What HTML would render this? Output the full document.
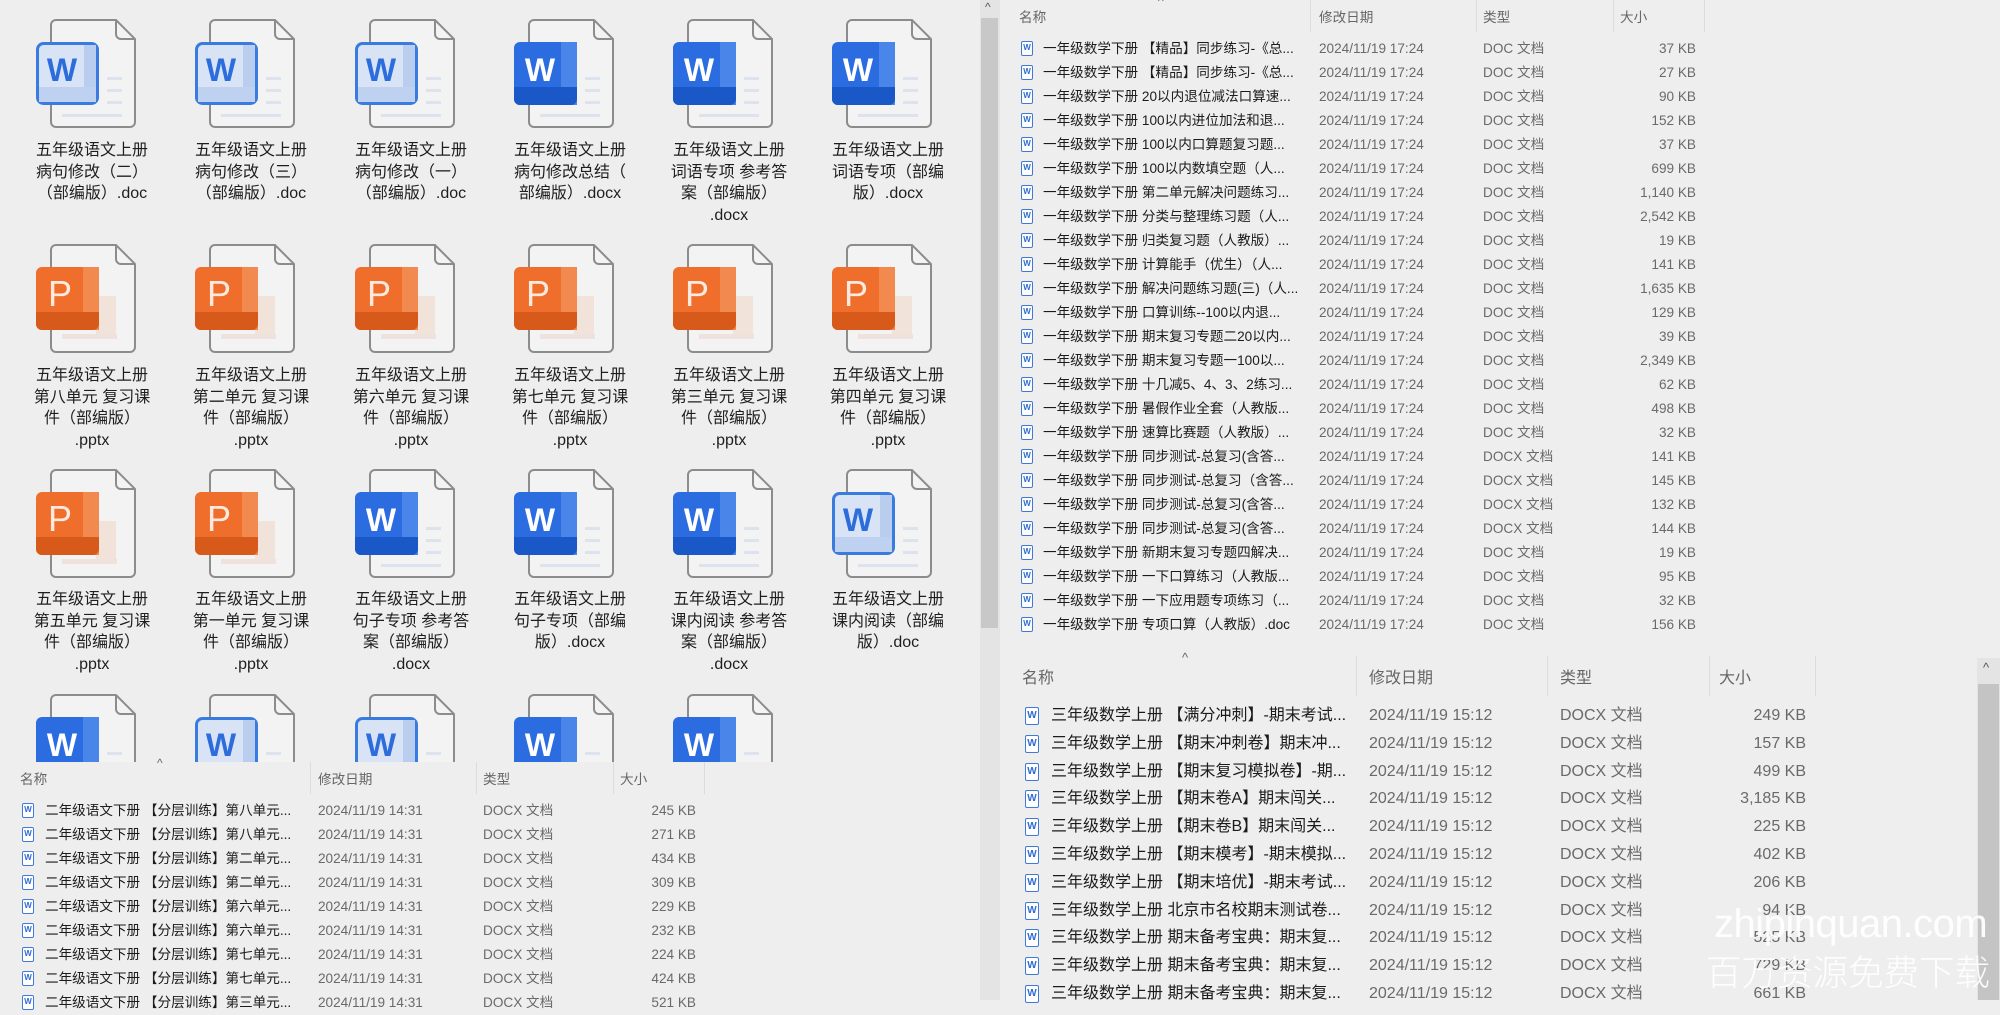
<!DOCTYPE html>
<html><head><meta charset="utf-8">
<style>
*{margin:0;padding:0;box-sizing:border-box}
body{width:2000px;height:1000px;overflow:hidden;background:#eeeeee;position:relative;font-family:"Liberation Sans","Noto Sans CJK SC",sans-serif;color:#1b1b1b}
.ico{position:absolute;width:100px;height:112px}
.lab{position:absolute;width:150px;text-align:center;font-size:16px;line-height:21.7px;color:#1e1e1e}
.r{position:absolute;left:0;width:2000px;white-space:nowrap}
.r span{position:absolute;top:0}
.ic{display:inline-block;width:12px;height:15px;border:1.5px solid #3f7ad6;border-radius:2px;background:#fff;font:bold 8px/12px "Liberation Sans",sans-serif;color:#2f6ad0;text-align:center}
.n{overflow:hidden}
.d,.t,.s{color:#6a6a6a}
.s{text-align:right}
.h{position:absolute;color:#666;white-space:nowrap}
.sep{position:absolute;width:1px;background:#dcdcdc}
/* panel A */
.A{height:24px;line-height:24px;font-size:13.6px}
.A .ic{left:1021px;top:4px}
.A .n{left:1043px;width:262px}
.A .d{left:1319px}.A .t{left:1483px}.A .s{left:1610px;width:86px}
/* panel B */
.B{height:24px;line-height:24px;font-size:13.6px}
.B .ic{left:22px;top:4px}
.B .n{left:45px;width:258px}
.B .d{left:318px}.B .t{left:483px}.B .s{left:610px;width:86px}
/* panel C */
.C{height:28px;line-height:28px;font-size:16px}
.C .ic{left:1025px;top:5px;width:14px;height:18px;font-size:10px;line-height:15px}
.C .n{left:1051px;width:305px}
.C .d{left:1369px}.C .t{left:1560px}.C .s{left:1710px;width:96px}
</style></head><body>
<svg width="0" height="0" style="position:absolute">
<defs>
<symbol id="pg" viewBox="0 0 100 112">
<path d="M20,1 H80 L99,20 V103 a5 5 0 0 1 -5 5 H20 a5 5 0 0 1 -5 -5 V6 a5 5 0 0 1 5 -5 z" fill="#f3f3f3" stroke="#8c8c8c" stroke-width="2"/>
<path d="M80,1 V15 a5 5 0 0 0 5 5 H99" fill="none" stroke="#8c8c8c" stroke-width="2"/>
</symbol>
<symbol id="lines" viewBox="0 0 100 112">
<rect x="71" y="58" width="15" height="3" fill="#dde3ec"/><rect x="71" y="70" width="15" height="3" fill="#dde3ec"/><rect x="71" y="82" width="15" height="3" fill="#dde3ec"/><rect x="26" y="95" width="60" height="3" fill="#dde3ec"/>
</symbol>
</defs></svg>

<!-- icon grid -->
<div id="grid"></div>

<!-- Row 1 -->
<svg class="ico" style="left:36px;top:19px" viewBox="0 0 100 112"><use href="#pg"/><use href="#lines"/><rect x="1.5" y="24.5" width="60" height="60" rx="6" fill="#d8e4f6" stroke="#3a7be0" stroke-width="3"/><rect x="48" y="26" width="12" height="57" fill="#b9cdef"/><rect x="3" y="68" width="57" height="15" fill="#bed1f0"/><text x="26" y="62" text-anchor="middle" font-family="Liberation Sans" font-weight="bold" font-size="32" fill="#2d6cdb">W</text></svg>
<div class="lab" style="left:17px;top:140px">五年级语文上册<br>病句修改（二）<br>（部编版）.doc</div>
<svg class="ico" style="left:195px;top:19px" viewBox="0 0 100 112"><use href="#pg"/><use href="#lines"/><rect x="1.5" y="24.5" width="60" height="60" rx="6" fill="#d8e4f6" stroke="#3a7be0" stroke-width="3"/><rect x="48" y="26" width="12" height="57" fill="#b9cdef"/><rect x="3" y="68" width="57" height="15" fill="#bed1f0"/><text x="26" y="62" text-anchor="middle" font-family="Liberation Sans" font-weight="bold" font-size="32" fill="#2d6cdb">W</text></svg>
<div class="lab" style="left:176px;top:140px">五年级语文上册<br>病句修改（三）<br>（部编版）.doc</div>
<svg class="ico" style="left:355px;top:19px" viewBox="0 0 100 112"><use href="#pg"/><use href="#lines"/><rect x="1.5" y="24.5" width="60" height="60" rx="6" fill="#d8e4f6" stroke="#3a7be0" stroke-width="3"/><rect x="48" y="26" width="12" height="57" fill="#b9cdef"/><rect x="3" y="68" width="57" height="15" fill="#bed1f0"/><text x="26" y="62" text-anchor="middle" font-family="Liberation Sans" font-weight="bold" font-size="32" fill="#2d6cdb">W</text></svg>
<div class="lab" style="left:336px;top:140px">五年级语文上册<br>病句修改（一）<br>（部编版）.doc</div>
<svg class="ico" style="left:514px;top:19px" viewBox="0 0 100 112"><use href="#pg"/><use href="#lines"/><rect x="0" y="23" width="63" height="63" rx="6" fill="#2b6de0"/><rect x="47" y="23" width="16" height="63" fill="#4a86ea"/><path d="M0,68 H63 V80 a6 6 0 0 1 -6 6 H6 a6 6 0 0 1 -6 -6z" fill="#1a58c8"/><text x="26" y="62" text-anchor="middle" font-family="Liberation Sans" font-weight="bold" font-size="32" fill="#fff">W</text></svg>
<div class="lab" style="left:495px;top:140px">五年级语文上册<br>病句修改总结（<br>部编版）.docx</div>
<svg class="ico" style="left:673px;top:19px" viewBox="0 0 100 112"><use href="#pg"/><use href="#lines"/><rect x="0" y="23" width="63" height="63" rx="6" fill="#2b6de0"/><rect x="47" y="23" width="16" height="63" fill="#4a86ea"/><path d="M0,68 H63 V80 a6 6 0 0 1 -6 6 H6 a6 6 0 0 1 -6 -6z" fill="#1a58c8"/><text x="26" y="62" text-anchor="middle" font-family="Liberation Sans" font-weight="bold" font-size="32" fill="#fff">W</text></svg>
<div class="lab" style="left:654px;top:140px">五年级语文上册<br>词语专项 参考答<br>案（部编版）<br>.docx</div>
<svg class="ico" style="left:832px;top:19px" viewBox="0 0 100 112"><use href="#pg"/><use href="#lines"/><rect x="0" y="23" width="63" height="63" rx="6" fill="#2b6de0"/><rect x="47" y="23" width="16" height="63" fill="#4a86ea"/><path d="M0,68 H63 V80 a6 6 0 0 1 -6 6 H6 a6 6 0 0 1 -6 -6z" fill="#1a58c8"/><text x="26" y="62" text-anchor="middle" font-family="Liberation Sans" font-weight="bold" font-size="32" fill="#fff">W</text></svg>
<div class="lab" style="left:813px;top:140px">五年级语文上册<br>词语专项（部编<br>版）.docx</div>

<!-- Row 2 PPT -->
<svg class="ico" style="left:36px;top:244px" viewBox="0 0 100 112"><use href="#pg"/><rect x="60" y="52" width="20" height="42" fill="#f1e2da"/><rect x="26" y="90" width="55" height="5" fill="#efe2dc"/><rect x="0" y="23" width="63" height="63" rx="6" fill="#ef6e2c"/><rect x="47" y="23" width="16" height="63" fill="#f2894f"/><path d="M0,68 H63 V80 a6 6 0 0 1 -6 6 H6 a6 6 0 0 1 -6 -6z" fill="#d75a1b"/><text x="12" y="62" font-family="Liberation Sans" font-size="36" fill="#fde9dd">P</text></svg>
<div class="lab" style="left:17px;top:365px">五年级语文上册<br>第八单元 复习课<br>件（部编版）<br>.pptx</div>
<svg class="ico" style="left:195px;top:244px" viewBox="0 0 100 112"><use href="#pg"/><rect x="60" y="52" width="20" height="42" fill="#f1e2da"/><rect x="26" y="90" width="55" height="5" fill="#efe2dc"/><rect x="0" y="23" width="63" height="63" rx="6" fill="#ef6e2c"/><rect x="47" y="23" width="16" height="63" fill="#f2894f"/><path d="M0,68 H63 V80 a6 6 0 0 1 -6 6 H6 a6 6 0 0 1 -6 -6z" fill="#d75a1b"/><text x="12" y="62" font-family="Liberation Sans" font-size="36" fill="#fde9dd">P</text></svg>
<div class="lab" style="left:176px;top:365px">五年级语文上册<br>第二单元 复习课<br>件（部编版）<br>.pptx</div>
<svg class="ico" style="left:355px;top:244px" viewBox="0 0 100 112"><use href="#pg"/><rect x="60" y="52" width="20" height="42" fill="#f1e2da"/><rect x="26" y="90" width="55" height="5" fill="#efe2dc"/><rect x="0" y="23" width="63" height="63" rx="6" fill="#ef6e2c"/><rect x="47" y="23" width="16" height="63" fill="#f2894f"/><path d="M0,68 H63 V80 a6 6 0 0 1 -6 6 H6 a6 6 0 0 1 -6 -6z" fill="#d75a1b"/><text x="12" y="62" font-family="Liberation Sans" font-size="36" fill="#fde9dd">P</text></svg>
<div class="lab" style="left:336px;top:365px">五年级语文上册<br>第六单元 复习课<br>件（部编版）<br>.pptx</div>
<svg class="ico" style="left:514px;top:244px" viewBox="0 0 100 112"><use href="#pg"/><rect x="60" y="52" width="20" height="42" fill="#f1e2da"/><rect x="26" y="90" width="55" height="5" fill="#efe2dc"/><rect x="0" y="23" width="63" height="63" rx="6" fill="#ef6e2c"/><rect x="47" y="23" width="16" height="63" fill="#f2894f"/><path d="M0,68 H63 V80 a6 6 0 0 1 -6 6 H6 a6 6 0 0 1 -6 -6z" fill="#d75a1b"/><text x="12" y="62" font-family="Liberation Sans" font-size="36" fill="#fde9dd">P</text></svg>
<div class="lab" style="left:495px;top:365px">五年级语文上册<br>第七单元 复习课<br>件（部编版）<br>.pptx</div>
<svg class="ico" style="left:673px;top:244px" viewBox="0 0 100 112"><use href="#pg"/><rect x="60" y="52" width="20" height="42" fill="#f1e2da"/><rect x="26" y="90" width="55" height="5" fill="#efe2dc"/><rect x="0" y="23" width="63" height="63" rx="6" fill="#ef6e2c"/><rect x="47" y="23" width="16" height="63" fill="#f2894f"/><path d="M0,68 H63 V80 a6 6 0 0 1 -6 6 H6 a6 6 0 0 1 -6 -6z" fill="#d75a1b"/><text x="12" y="62" font-family="Liberation Sans" font-size="36" fill="#fde9dd">P</text></svg>
<div class="lab" style="left:654px;top:365px">五年级语文上册<br>第三单元 复习课<br>件（部编版）<br>.pptx</div>
<svg class="ico" style="left:832px;top:244px" viewBox="0 0 100 112"><use href="#pg"/><rect x="60" y="52" width="20" height="42" fill="#f1e2da"/><rect x="26" y="90" width="55" height="5" fill="#efe2dc"/><rect x="0" y="23" width="63" height="63" rx="6" fill="#ef6e2c"/><rect x="47" y="23" width="16" height="63" fill="#f2894f"/><path d="M0,68 H63 V80 a6 6 0 0 1 -6 6 H6 a6 6 0 0 1 -6 -6z" fill="#d75a1b"/><text x="12" y="62" font-family="Liberation Sans" font-size="36" fill="#fde9dd">P</text></svg>
<div class="lab" style="left:813px;top:365px">五年级语文上册<br>第四单元 复习课<br>件（部编版）<br>.pptx</div>

<!-- Row 3 -->
<svg class="ico" style="left:36px;top:469px" viewBox="0 0 100 112"><use href="#pg"/><rect x="60" y="52" width="20" height="42" fill="#f1e2da"/><rect x="26" y="90" width="55" height="5" fill="#efe2dc"/><rect x="0" y="23" width="63" height="63" rx="6" fill="#ef6e2c"/><rect x="47" y="23" width="16" height="63" fill="#f2894f"/><path d="M0,68 H63 V80 a6 6 0 0 1 -6 6 H6 a6 6 0 0 1 -6 -6z" fill="#d75a1b"/><text x="12" y="62" font-family="Liberation Sans" font-size="36" fill="#fde9dd">P</text></svg>
<div class="lab" style="left:17px;top:589px">五年级语文上册<br>第五单元 复习课<br>件（部编版）<br>.pptx</div>
<svg class="ico" style="left:195px;top:469px" viewBox="0 0 100 112"><use href="#pg"/><rect x="60" y="52" width="20" height="42" fill="#f1e2da"/><rect x="26" y="90" width="55" height="5" fill="#efe2dc"/><rect x="0" y="23" width="63" height="63" rx="6" fill="#ef6e2c"/><rect x="47" y="23" width="16" height="63" fill="#f2894f"/><path d="M0,68 H63 V80 a6 6 0 0 1 -6 6 H6 a6 6 0 0 1 -6 -6z" fill="#d75a1b"/><text x="12" y="62" font-family="Liberation Sans" font-size="36" fill="#fde9dd">P</text></svg>
<div class="lab" style="left:176px;top:589px">五年级语文上册<br>第一单元 复习课<br>件（部编版）<br>.pptx</div>
<svg class="ico" style="left:355px;top:469px" viewBox="0 0 100 112"><use href="#pg"/><use href="#lines"/><rect x="0" y="23" width="63" height="63" rx="6" fill="#2b6de0"/><rect x="47" y="23" width="16" height="63" fill="#4a86ea"/><path d="M0,68 H63 V80 a6 6 0 0 1 -6 6 H6 a6 6 0 0 1 -6 -6z" fill="#1a58c8"/><text x="26" y="62" text-anchor="middle" font-family="Liberation Sans" font-weight="bold" font-size="32" fill="#fff">W</text></svg>
<div class="lab" style="left:336px;top:589px">五年级语文上册<br>句子专项 参考答<br>案（部编版）<br>.docx</div>
<svg class="ico" style="left:514px;top:469px" viewBox="0 0 100 112"><use href="#pg"/><use href="#lines"/><rect x="0" y="23" width="63" height="63" rx="6" fill="#2b6de0"/><rect x="47" y="23" width="16" height="63" fill="#4a86ea"/><path d="M0,68 H63 V80 a6 6 0 0 1 -6 6 H6 a6 6 0 0 1 -6 -6z" fill="#1a58c8"/><text x="26" y="62" text-anchor="middle" font-family="Liberation Sans" font-weight="bold" font-size="32" fill="#fff">W</text></svg>
<div class="lab" style="left:495px;top:589px">五年级语文上册<br>句子专项（部编<br>版）.docx</div>
<svg class="ico" style="left:673px;top:469px" viewBox="0 0 100 112"><use href="#pg"/><use href="#lines"/><rect x="0" y="23" width="63" height="63" rx="6" fill="#2b6de0"/><rect x="47" y="23" width="16" height="63" fill="#4a86ea"/><path d="M0,68 H63 V80 a6 6 0 0 1 -6 6 H6 a6 6 0 0 1 -6 -6z" fill="#1a58c8"/><text x="26" y="62" text-anchor="middle" font-family="Liberation Sans" font-weight="bold" font-size="32" fill="#fff">W</text></svg>
<div class="lab" style="left:654px;top:589px">五年级语文上册<br>课内阅读 参考答<br>案（部编版）<br>.docx</div>
<svg class="ico" style="left:832px;top:469px" viewBox="0 0 100 112"><use href="#pg"/><use href="#lines"/><rect x="1.5" y="24.5" width="60" height="60" rx="6" fill="#d8e4f6" stroke="#3a7be0" stroke-width="3"/><rect x="48" y="26" width="12" height="57" fill="#b9cdef"/><rect x="3" y="68" width="57" height="15" fill="#bed1f0"/><text x="26" y="62" text-anchor="middle" font-family="Liberation Sans" font-weight="bold" font-size="32" fill="#2d6cdb">W</text></svg>
<div class="lab" style="left:813px;top:589px">五年级语文上册<br>课内阅读（部编<br>版）.doc</div>

<!-- Row 4 (clipped) -->
<svg class="ico" style="left:36px;top:694px" viewBox="0 0 100 112"><use href="#pg"/><use href="#lines"/><rect x="0" y="23" width="63" height="63" rx="6" fill="#2b6de0"/><rect x="47" y="23" width="16" height="63" fill="#4a86ea"/><text x="26" y="62" text-anchor="middle" font-family="Liberation Sans" font-weight="bold" font-size="32" fill="#fff">W</text></svg>
<svg class="ico" style="left:195px;top:694px" viewBox="0 0 100 112"><use href="#pg"/><use href="#lines"/><rect x="1.5" y="24.5" width="60" height="60" rx="6" fill="#d8e4f6" stroke="#3a7be0" stroke-width="3"/><rect x="48" y="26" width="12" height="57" fill="#b9cdef"/><text x="26" y="62" text-anchor="middle" font-family="Liberation Sans" font-weight="bold" font-size="32" fill="#2d6cdb">W</text></svg>
<svg class="ico" style="left:355px;top:694px" viewBox="0 0 100 112"><use href="#pg"/><use href="#lines"/><rect x="1.5" y="24.5" width="60" height="60" rx="6" fill="#d8e4f6" stroke="#3a7be0" stroke-width="3"/><rect x="48" y="26" width="12" height="57" fill="#b9cdef"/><text x="26" y="62" text-anchor="middle" font-family="Liberation Sans" font-weight="bold" font-size="32" fill="#2d6cdb">W</text></svg>
<svg class="ico" style="left:514px;top:694px" viewBox="0 0 100 112"><use href="#pg"/><use href="#lines"/><rect x="0" y="23" width="63" height="63" rx="6" fill="#2b6de0"/><rect x="47" y="23" width="16" height="63" fill="#4a86ea"/><text x="26" y="62" text-anchor="middle" font-family="Liberation Sans" font-weight="bold" font-size="32" fill="#fff">W</text></svg>
<svg class="ico" style="left:673px;top:694px" viewBox="0 0 100 112"><use href="#pg"/><use href="#lines"/><rect x="0" y="23" width="63" height="63" rx="6" fill="#2b6de0"/><rect x="47" y="23" width="16" height="63" fill="#4a86ea"/><text x="26" y="62" text-anchor="middle" font-family="Liberation Sans" font-weight="bold" font-size="32" fill="#fff">W</text></svg>

<!-- bottom-left list panel -->
<div style="position:absolute;left:0;top:762px;width:980px;height:238px;background:#eeeeee"></div>
<div class="h" style="left:157px;top:756px;font-size:12px">^</div>
<div class="h" style="left:20px;top:768px;font-size:13.6px">名称</div>
<div class="h" style="left:318px;top:768px;font-size:13.6px">修改日期</div>
<div class="h" style="left:483px;top:768px;font-size:13.6px">类型</div>
<div class="h" style="left:620px;top:768px;font-size:13.6px">大小</div>
<div class="sep" style="left:310px;top:762px;height:32px"></div>
<div class="sep" style="left:476px;top:762px;height:32px"></div>
<div class="sep" style="left:613px;top:762px;height:32px"></div>
<div class="sep" style="left:704px;top:762px;height:32px"></div>
<div class="r B" style="top:799px"><span class="ic">W</span><span class="n">二年级语文下册 【分层训练】第八单元...</span><span class="d">2024/11/19 14:31</span><span class="t">DOCX 文档</span><span class="s">245 KB</span></div>
<div class="r B" style="top:823px"><span class="ic">W</span><span class="n">二年级语文下册 【分层训练】第八单元...</span><span class="d">2024/11/19 14:31</span><span class="t">DOCX 文档</span><span class="s">271 KB</span></div>
<div class="r B" style="top:847px"><span class="ic">W</span><span class="n">二年级语文下册 【分层训练】第二单元...</span><span class="d">2024/11/19 14:31</span><span class="t">DOCX 文档</span><span class="s">434 KB</span></div>
<div class="r B" style="top:871px"><span class="ic">W</span><span class="n">二年级语文下册 【分层训练】第二单元...</span><span class="d">2024/11/19 14:31</span><span class="t">DOCX 文档</span><span class="s">309 KB</span></div>
<div class="r B" style="top:895px"><span class="ic">W</span><span class="n">二年级语文下册 【分层训练】第六单元...</span><span class="d">2024/11/19 14:31</span><span class="t">DOCX 文档</span><span class="s">229 KB</span></div>
<div class="r B" style="top:919px"><span class="ic">W</span><span class="n">二年级语文下册 【分层训练】第六单元...</span><span class="d">2024/11/19 14:31</span><span class="t">DOCX 文档</span><span class="s">232 KB</span></div>
<div class="r B" style="top:943px"><span class="ic">W</span><span class="n">二年级语文下册 【分层训练】第七单元...</span><span class="d">2024/11/19 14:31</span><span class="t">DOCX 文档</span><span class="s">224 KB</span></div>
<div class="r B" style="top:967px"><span class="ic">W</span><span class="n">二年级语文下册 【分层训练】第七单元...</span><span class="d">2024/11/19 14:31</span><span class="t">DOCX 文档</span><span class="s">424 KB</span></div>
<div class="r B" style="top:991px"><span class="ic">W</span><span class="n">二年级语文下册 【分层训练】第三单元...</span><span class="d">2024/11/19 14:31</span><span class="t">DOCX 文档</span><span class="s">521 KB</span></div>

<!-- middle scrollbar -->
<div style="position:absolute;left:980px;top:0;width:20px;height:1000px;background:#e4e4e4"></div>
<div style="position:absolute;left:981px;top:18px;width:17px;height:610px;background:#c8c8c8"></div>
<div class="h" style="left:985px;top:0;font-size:12px;color:#555">^</div>

<!-- top-right list -->
<div class="h" style="left:1158px;top:-6px;font-size:12px">^</div>
<div class="h" style="left:1019px;top:6px;font-size:13.6px">名称</div>
<div class="h" style="left:1319px;top:6px;font-size:13.6px">修改日期</div>
<div class="h" style="left:1483px;top:6px;font-size:13.6px">类型</div>
<div class="h" style="left:1620px;top:6px;font-size:13.6px">大小</div>
<div class="sep" style="left:1310px;top:0;height:32px"></div>
<div class="sep" style="left:1476px;top:0;height:32px"></div>
<div class="sep" style="left:1613px;top:0;height:32px"></div>
<div class="sep" style="left:1704px;top:0;height:32px"></div>
<div class="r A" style="top:37px"><span class="ic">W</span><span class="n">一年级数学下册 【精品】同步练习-《总...</span><span class="d">2024/11/19 17:24</span><span class="t">DOC 文档</span><span class="s">37 KB</span></div>
<div class="r A" style="top:61px"><span class="ic">W</span><span class="n">一年级数学下册 【精品】同步练习-《总...</span><span class="d">2024/11/19 17:24</span><span class="t">DOC 文档</span><span class="s">27 KB</span></div>
<div class="r A" style="top:85px"><span class="ic">W</span><span class="n">一年级数学下册 20以内退位减法口算速...</span><span class="d">2024/11/19 17:24</span><span class="t">DOC 文档</span><span class="s">90 KB</span></div>
<div class="r A" style="top:109px"><span class="ic">W</span><span class="n">一年级数学下册 100以内进位加法和退...</span><span class="d">2024/11/19 17:24</span><span class="t">DOC 文档</span><span class="s">152 KB</span></div>
<div class="r A" style="top:133px"><span class="ic">W</span><span class="n">一年级数学下册 100以内口算题复习题...</span><span class="d">2024/11/19 17:24</span><span class="t">DOC 文档</span><span class="s">37 KB</span></div>
<div class="r A" style="top:157px"><span class="ic">W</span><span class="n">一年级数学下册 100以内数填空题（人...</span><span class="d">2024/11/19 17:24</span><span class="t">DOC 文档</span><span class="s">699 KB</span></div>
<div class="r A" style="top:181px"><span class="ic">W</span><span class="n">一年级数学下册 第二单元解决问题练习...</span><span class="d">2024/11/19 17:24</span><span class="t">DOC 文档</span><span class="s">1,140 KB</span></div>
<div class="r A" style="top:205px"><span class="ic">W</span><span class="n">一年级数学下册 分类与整理练习题（人...</span><span class="d">2024/11/19 17:24</span><span class="t">DOC 文档</span><span class="s">2,542 KB</span></div>
<div class="r A" style="top:229px"><span class="ic">W</span><span class="n">一年级数学下册 归类复习题（人教版）...</span><span class="d">2024/11/19 17:24</span><span class="t">DOC 文档</span><span class="s">19 KB</span></div>
<div class="r A" style="top:253px"><span class="ic">W</span><span class="n">一年级数学下册 计算能手（优生）（人...</span><span class="d">2024/11/19 17:24</span><span class="t">DOC 文档</span><span class="s">141 KB</span></div>
<div class="r A" style="top:277px"><span class="ic">W</span><span class="n">一年级数学下册 解决问题练习题(三)（人...</span><span class="d">2024/11/19 17:24</span><span class="t">DOC 文档</span><span class="s">1,635 KB</span></div>
<div class="r A" style="top:301px"><span class="ic">W</span><span class="n">一年级数学下册 口算训练--100以内退...</span><span class="d">2024/11/19 17:24</span><span class="t">DOC 文档</span><span class="s">129 KB</span></div>
<div class="r A" style="top:325px"><span class="ic">W</span><span class="n">一年级数学下册 期末复习专题二20以内...</span><span class="d">2024/11/19 17:24</span><span class="t">DOC 文档</span><span class="s">39 KB</span></div>
<div class="r A" style="top:349px"><span class="ic">W</span><span class="n">一年级数学下册 期末复习专题一100以...</span><span class="d">2024/11/19 17:24</span><span class="t">DOC 文档</span><span class="s">2,349 KB</span></div>
<div class="r A" style="top:373px"><span class="ic">W</span><span class="n">一年级数学下册 十几减5、4、3、2练习...</span><span class="d">2024/11/19 17:24</span><span class="t">DOC 文档</span><span class="s">62 KB</span></div>
<div class="r A" style="top:397px"><span class="ic">W</span><span class="n">一年级数学下册 暑假作业全套（人教版...</span><span class="d">2024/11/19 17:24</span><span class="t">DOC 文档</span><span class="s">498 KB</span></div>
<div class="r A" style="top:421px"><span class="ic">W</span><span class="n">一年级数学下册 速算比赛题（人教版）...</span><span class="d">2024/11/19 17:24</span><span class="t">DOC 文档</span><span class="s">32 KB</span></div>
<div class="r A" style="top:445px"><span class="ic">W</span><span class="n">一年级数学下册 同步测试-总复习(含答...</span><span class="d">2024/11/19 17:24</span><span class="t">DOCX 文档</span><span class="s">141 KB</span></div>
<div class="r A" style="top:469px"><span class="ic">W</span><span class="n">一年级数学下册 同步测试-总复习（含答...</span><span class="d">2024/11/19 17:24</span><span class="t">DOCX 文档</span><span class="s">145 KB</span></div>
<div class="r A" style="top:493px"><span class="ic">W</span><span class="n">一年级数学下册 同步测试-总复习(含答...</span><span class="d">2024/11/19 17:24</span><span class="t">DOCX 文档</span><span class="s">132 KB</span></div>
<div class="r A" style="top:517px"><span class="ic">W</span><span class="n">一年级数学下册 同步测试-总复习(含答...</span><span class="d">2024/11/19 17:24</span><span class="t">DOCX 文档</span><span class="s">144 KB</span></div>
<div class="r A" style="top:541px"><span class="ic">W</span><span class="n">一年级数学下册 新期末复习专题四解决...</span><span class="d">2024/11/19 17:24</span><span class="t">DOC 文档</span><span class="s">19 KB</span></div>
<div class="r A" style="top:565px"><span class="ic">W</span><span class="n">一年级数学下册 一下口算练习（人教版...</span><span class="d">2024/11/19 17:24</span><span class="t">DOC 文档</span><span class="s">95 KB</span></div>
<div class="r A" style="top:589px"><span class="ic">W</span><span class="n">一年级数学下册 一下应用题专项练习（...</span><span class="d">2024/11/19 17:24</span><span class="t">DOC 文档</span><span class="s">32 KB</span></div>
<div class="r A" style="top:613px"><span class="ic">W</span><span class="n">一年级数学下册 专项口算（人教版）.doc</span><span class="d">2024/11/19 17:24</span><span class="t">DOC 文档</span><span class="s">156 KB</span></div>

<!-- bottom-right list -->
<div class="h" style="left:1182px;top:650px;font-size:13px">^</div>
<div class="h" style="left:1022px;top:664px;font-size:16px">名称</div>
<div class="h" style="left:1369px;top:664px;font-size:16px">修改日期</div>
<div class="h" style="left:1560px;top:664px;font-size:16px">类型</div>
<div class="h" style="left:1719px;top:664px;font-size:16px">大小</div>
<div class="sep" style="left:1356px;top:656px;height:40px"></div>
<div class="sep" style="left:1547px;top:656px;height:40px"></div>
<div class="sep" style="left:1709px;top:656px;height:40px"></div>
<div class="sep" style="left:1815px;top:656px;height:40px"></div>
<div class="r C" style="top:702px"><span class="ic">W</span><span class="n">三年级数学上册 【满分冲刺】-期末考试...</span><span class="d">2024/11/19 15:12</span><span class="t">DOCX 文档</span><span class="s">249 KB</span></div>
<div class="r C" style="top:730px"><span class="ic">W</span><span class="n">三年级数学上册 【期末冲刺卷】期末冲...</span><span class="d">2024/11/19 15:12</span><span class="t">DOCX 文档</span><span class="s">157 KB</span></div>
<div class="r C" style="top:758px"><span class="ic">W</span><span class="n">三年级数学上册 【期末复习模拟卷】-期...</span><span class="d">2024/11/19 15:12</span><span class="t">DOCX 文档</span><span class="s">499 KB</span></div>
<div class="r C" style="top:785px"><span class="ic">W</span><span class="n">三年级数学上册 【期末卷A】期末闯关...</span><span class="d">2024/11/19 15:12</span><span class="t">DOCX 文档</span><span class="s">3,185 KB</span></div>
<div class="r C" style="top:813px"><span class="ic">W</span><span class="n">三年级数学上册 【期末卷B】期末闯关...</span><span class="d">2024/11/19 15:12</span><span class="t">DOCX 文档</span><span class="s">225 KB</span></div>
<div class="r C" style="top:841px"><span class="ic">W</span><span class="n">三年级数学上册 【期末模考】-期末模拟...</span><span class="d">2024/11/19 15:12</span><span class="t">DOCX 文档</span><span class="s">402 KB</span></div>
<div class="r C" style="top:869px"><span class="ic">W</span><span class="n">三年级数学上册 【期末培优】-期末考试...</span><span class="d">2024/11/19 15:12</span><span class="t">DOCX 文档</span><span class="s">206 KB</span></div>
<div class="r C" style="top:897px"><span class="ic">W</span><span class="n">三年级数学上册 北京市名校期末测试卷...</span><span class="d">2024/11/19 15:12</span><span class="t">DOCX 文档</span><span class="s">94 KB</span></div>
<div class="r C" style="top:924px"><span class="ic">W</span><span class="n">三年级数学上册 期末备考宝典：期末复...</span><span class="d">2024/11/19 15:12</span><span class="t">DOCX 文档</span><span class="s">525 KB</span></div>
<div class="r C" style="top:952px"><span class="ic">W</span><span class="n">三年级数学上册 期末备考宝典：期末复...</span><span class="d">2024/11/19 15:12</span><span class="t">DOCX 文档</span><span class="s">729 KB</span></div>
<div class="r C" style="top:980px"><span class="ic">W</span><span class="n">三年级数学上册 期末备考宝典：期末复...</span><span class="d">2024/11/19 15:12</span><span class="t">DOCX 文档</span><span class="s">661 KB</span></div>

<!-- right scrollbar -->
<div style="position:absolute;left:1977px;top:658px;width:23px;height:342px;background:#e4e4e4"></div>
<div style="position:absolute;left:1978px;top:684px;width:21px;height:316px;background:#c4c4c4"></div>
<div class="h" style="left:1983px;top:660px;font-size:13px;color:#555">^</div>

<!-- watermark -->
<div style="position:absolute;left:1714px;top:902px;font-size:40px;color:rgba(255,255,255,0.92);white-space:nowrap;letter-spacing:-0.5px">zhipinquan.com</div>
<div style="position:absolute;left:1706px;top:950px;font-size:35.5px;line-height:42px;color:rgba(255,255,255,0.92);white-space:nowrap;font-family:'Noto Sans CJK SC',sans-serif;font-weight:300">百万资源免费下载</div>
</body></html>
